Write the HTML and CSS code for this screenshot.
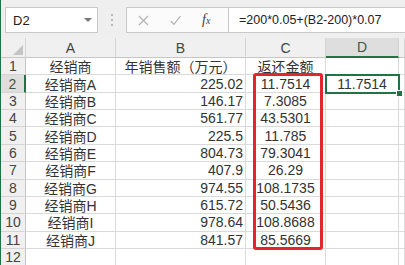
FILE: index.html
```html
<!DOCTYPE html>
<html lang="zh-CN">

<head>
  <meta charset="UTF-8">
  <meta name="viewport" content="width=device-width, initial-scale=1.0">
  <title>返还金额</title>
  <link rel="stylesheet" href="styles.css">
</head>

<body>
  <div class="app">
    <div class="formula-bar">
      <div class="name-box">
        <span>D2</span>
        <span class="caret"></span>
      </div>
      <div class="grip"><i></i><i></i><i></i></div>
      <div class="tools">
        <svg class="tool" width="11" height="11" viewBox="0 0 11 11">
          <path d="M1 1 L10 10 M10 1 L1 10" stroke="#b4b4b4" stroke-width="1.2" fill="none" />
        </svg>
        <svg class="tool" width="11" height="11" viewBox="0 0 11 11">
          <path d="M0.8 6 L4 9.4 L10.4 1.2" stroke="#b4b4b4" stroke-width="1.2" fill="none" />
        </svg>
        <span class="fx">f<small>x</small></span>
      </div>
      <div class="formula">=200*0.05+(B2-200)*0.07</div>
    </div>

    <div class="sheet">
      <div class="head corner">
        <svg width="10" height="10" viewBox="0 0 10 10">
          <polygon points="10,0 10,10 0,10" fill="#c4c4c4" />
        </svg>
      </div>
      <div class="head">A</div>
      <div class="head">B</div>
      <div class="head">C</div>
      <div class="head active-col">D</div>
      <div class="head"></div>

      <div class="head row-no">1</div>
      <div class="cell">经销商</div>
      <div class="cell">年销售额（万元）</div>
      <div class="cell">返还金额</div>
      <div class="cell"></div>
      <div class="cell"></div>

      <div class="head row-no active-row">2</div>
      <div class="cell">经销商A</div>
      <div class="cell num">225.02</div>
      <div class="cell">11.7514</div>
      <div class="cell">11.7514</div>
      <div class="cell"></div>

      <div class="head row-no">3</div>
      <div class="cell">经销商B</div>
      <div class="cell num">146.17</div>
      <div class="cell">7.3085</div>
      <div class="cell"></div>
      <div class="cell"></div>

      <div class="head row-no">4</div>
      <div class="cell">经销商C</div>
      <div class="cell num">561.77</div>
      <div class="cell">43.5301</div>
      <div class="cell"></div>
      <div class="cell"></div>

      <div class="head row-no">5</div>
      <div class="cell">经销商D</div>
      <div class="cell num">225.5</div>
      <div class="cell">11.785</div>
      <div class="cell"></div>
      <div class="cell"></div>

      <div class="head row-no">6</div>
      <div class="cell">经销商E</div>
      <div class="cell num">804.73</div>
      <div class="cell">79.3041</div>
      <div class="cell"></div>
      <div class="cell"></div>

      <div class="head row-no">7</div>
      <div class="cell">经销商F</div>
      <div class="cell num">407.9</div>
      <div class="cell">26.29</div>
      <div class="cell"></div>
      <div class="cell"></div>

      <div class="head row-no">8</div>
      <div class="cell">经销商G</div>
      <div class="cell num">974.55</div>
      <div class="cell">108.1735</div>
      <div class="cell"></div>
      <div class="cell"></div>

      <div class="head row-no">9</div>
      <div class="cell">经销商H</div>
      <div class="cell num">615.72</div>
      <div class="cell">50.5436</div>
      <div class="cell"></div>
      <div class="cell"></div>

      <div class="head row-no">10</div>
      <div class="cell">经销商I</div>
      <div class="cell num">978.64</div>
      <div class="cell">108.8688</div>
      <div class="cell"></div>
      <div class="cell"></div>

      <div class="head row-no">11</div>
      <div class="cell">经销商J</div>
      <div class="cell num">841.57</div>
      <div class="cell">85.5669</div>
      <div class="cell"></div>
      <div class="cell"></div>

      <div class="head row-no">12</div>
      <div class="cell"></div>
      <div class="cell"></div>
      <div class="cell"></div>
      <div class="cell"></div>
      <div class="cell"></div>

      <!-- selection on D2 and the red mark round C2:C11 -->
      <div class="selection"><span class="handle"></span></div>
      <div class="mark"></div>
    </div>
  </div>
</body>

</html>
```

FILE: styles.css
```css
body {
  margin: 0;
  font-family: "Liberation Sans", "Noto Sans CJK SC", sans-serif;
  background-color: #fff;
}

.app {
  width: 405px;
  height: 265px;
  overflow: hidden;
  border-left: 1px solid #217346;
  box-sizing: border-box;
}

.formula-bar {
  display: flex;
  height: 38px;
  padding-top: 7px;
  box-sizing: border-box;
  background-color: #efefef;
}

.name-box {
  display: flex;
  align-items: center;
  justify-content: space-between;
  width: 93px;
  height: 26px;
  margin-left: 4px;
  padding: 0 5px 0 7px;
  box-sizing: border-box;
  background-color: #fff;
  border: 1px solid #c8c8c8;
  font-size: 13px;
  color: #222;
}

.caret {
  width: 0;
  height: 0;
  border-left: 4px solid transparent;
  border-right: 4px solid transparent;
  border-top: 4px solid #777;
}

.grip {
  display: flex;
  flex-direction: column;
  align-items: center;
  justify-content: center;
  gap: 3px;
  width: 28px;
  height: 26px;
}

.grip i {
  width: 2px;
  height: 2px;
  background-color: #b8b8b8;
}

.tools {
  display: flex;
  align-items: center;
  gap: 21px;
  width: 102px;
  height: 26px;
  padding-left: 11px;
  box-sizing: border-box;
  background-color: #fbfbfb;
  border: 1px solid #c8c8c8;
  border-right: none;
}

.fx {
  font-family: "Liberation Serif", serif;
  font-style: italic;
  font-size: 14px;
  color: #444;
}

.fx small {
  font-size: 10px;
}

.formula {
  flex: 1;
  height: 26px;
  padding-left: 10px;
  box-sizing: border-box;
  background-color: #fff;
  border: 1px solid #c8c8c8;
  border-right: none;
  font-size: 12.5px;
  line-height: 24px;
  color: #222;
}

.sheet {
  position: relative;
  display: grid;
  grid-template-columns: 25px 90px 130px 80px 73px 1fr;
  grid-template-rows: 20px repeat(12, 17.36px);
  font-size: 14px;
  color: #333;
}

.head,
.cell {
  display: flex;
  align-items: center;
  justify-content: center;
  box-sizing: border-box;
  white-space: nowrap;
  overflow: hidden;
}

.head {
  background-color: #f0f0f0;
  border-right: 1px solid #d4d4d4;
  border-bottom: 1px solid #c6c6c6;
  color: #444;
}

.corner {
  justify-content: flex-end;
  align-items: flex-end;
  padding: 0 2px 2px 0;
}

.row-no {
  border-bottom-color: #d4d4d4;
  border-right-color: #c6c6c6;
}

.active-col {
  background-color: #dedede;
  border-bottom: 2px solid #217346;
  color: #3c5a48;
}

.active-row {
  background-color: #dedede;
  border-right: 2px solid #217346;
  color: #3c5a48;
}

.cell {
  border-right: 1px solid #dadada;
  border-bottom: 1px solid #dadada;
}

.num {
  justify-content: flex-end;
  padding-right: 2px;
}

.selection {
  position: absolute;
  left: 324px;
  top: 36px;
  width: 75px;
  height: 20px;
  border: 2px solid #217346;
  box-sizing: border-box;
}

.handle {
  position: absolute;
  right: -5px;
  bottom: -5px;
  width: 5px;
  height: 5px;
  background-color: #217346;
  border: 1px solid #fff;
}

.mark {
  position: absolute;
  left: 252px;
  top: 35px;
  width: 70px;
  height: 177px;
  border: 3px solid #e3262b;
  border-radius: 3px;
  box-sizing: border-box;
}
```
